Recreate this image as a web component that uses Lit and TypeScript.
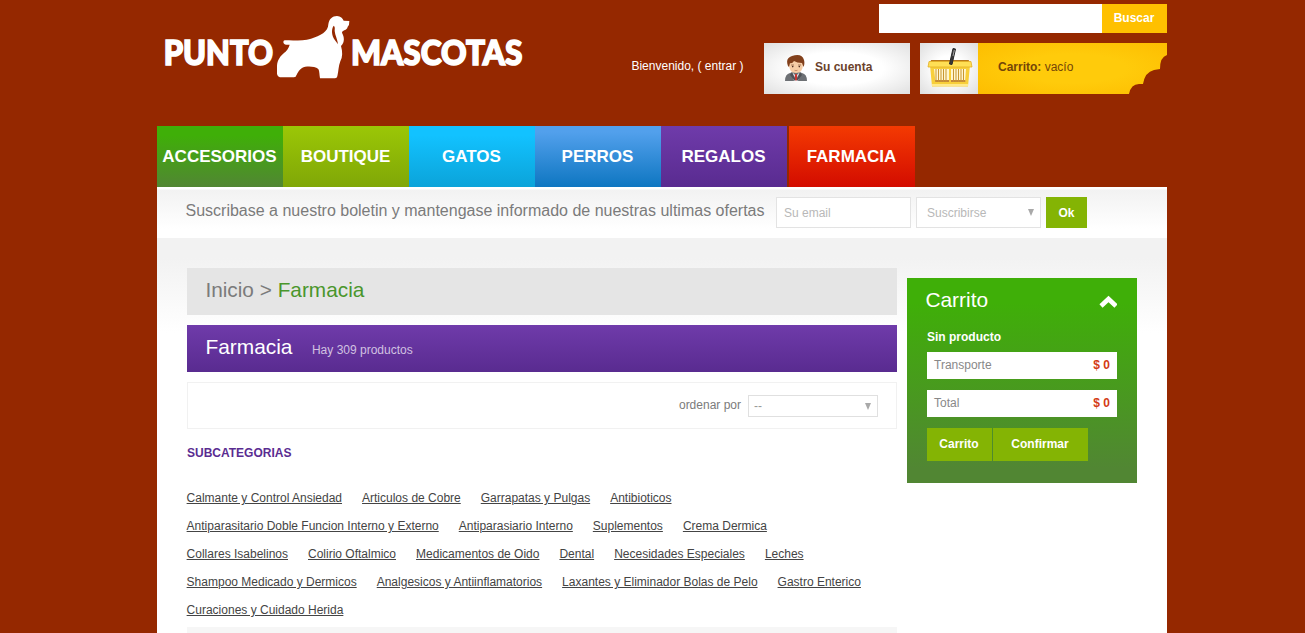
import { LitElement, html, css } from "lit";
import { customElement } from "lit/decorators.js";

const NAV = [
  ["ACCESORIOS", "green"],
  ["BOUTIQUE", "lime"],
  ["GATOS", "cyan"],
  ["PERROS", "blue"],
  ["REGALOS", "purple"],
  ["FARMACIA", "red"],
];

const ROWS = [
  ["Calmante y Control Ansiedad", "Articulos de Cobre", "Garrapatas y Pulgas", "Antibioticos"],
  ["Antiparasitario Doble Funcion Interno y Externo", "Antiparasiario Interno", "Suplementos", "Crema Dermica"],
  ["Collares Isabelinos", "Colirio Oftalmico", "Medicamentos de Oido", "Dental", "Necesidades Especiales", "Leches"],
  ["Shampoo Medicado y Dermicos", "Analgesicos y Antiinflamatorios", "Laxantes y Eliminador Bolas de Pelo", "Gastro Enterico"],
  ["Curaciones y Cuidado Herida"],
];

@customElement("app-root")
export class AppRoot extends LitElement {
  static styles = css`
    :host { display: block; height: 633px; overflow: hidden; background: #952800; font: 12px/16px "Liberation Sans", Arial, sans-serif; color: #7b7b7b; }
    * { box-sizing: border-box; }
    .page { width: 1010px; height: 633px; margin-left: 157px; display: flex; flex-direction: column; }
    .header { height: 126px; display: flex; justify-content: space-between; align-items: flex-start; flex: none; }
    .logo { width: 375px; height: 85px; margin-top: 5px; display: block; overflow: visible; }
    .logo text { font: 900 105px Lato, sans-serif; fill: #fff; stroke: #fff; stroke-width: 5px; }
    .tools { display: flex; flex-direction: column; align-items: flex-end; gap: 10px; padding-top: 4px; }
    .search { display: flex; height: 29px; }
    .field { width: 223px; background: #fff; }
    .searchbtn { width: 65px; background: #ffc000; color: #fff; font-weight: bold; line-height: 28px; text-align: center; padding-right: 1px; }
    .userrow { display: flex; height: 51px; }
    .welcome { color: #fff; line-height: 46px; margin-right: 20.5px; white-space: pre; }
    .account { width: 146px; margin-right: 10px; display: flex; padding-left: 20px; background: radial-gradient(ellipse at center, #fff 45%, #e0e0e0 100%); font-weight: bold; color: #6b422b; line-height: 48px; }
    .account svg { width: 24px; height: 28px; margin: 11px 7px 0 0; }
    .cart { width: 247px; display: flex; }
    .basket { width: 58px; background: radial-gradient(#fff 35%, #dedede 100%); }
    .basket svg { display: block; }
    .status { width: 189px; color: #744508; line-height: 48px; padding-left: 20px; background: radial-gradient(ellipse at center, #ffcb0b 40%, #fdbd00 100%); position: relative; }
    .status svg { position: absolute; right: 0; bottom: 0; }
    .nav { display: flex; height: 61px; flex: none; }
    .tab { width: 126px; color: #fff; font-weight: bold; font-size: 17px; line-height: 61px; text-align: center; padding-right: 1px; }
    .green { background: linear-gradient(#3faf08 15%, #518633); }
    .lime { background: linear-gradient(#9bc706, #80a707); }
    .cyan { background: linear-gradient(#12c2ff 15%, #0ba3d9); }
    .blue { background: linear-gradient(#52a0ec 10%, #0e76c1); }
    .purple { background: linear-gradient(#6f3baa, #592b90); }
    .red { background: linear-gradient(#f43a02, #d30c00); margin-left: 2px; }
    .news { height: 51px; flex: none; display: flex; padding: 10px 0 0 28.5px; background: linear-gradient(#fff 2px, #f2f2f2 3px, #fff 42px); }
    .newstext { width: 590.5px; font-size: 16px; line-height: 27px; white-space: nowrap; }
    .email { width: 135px; height: 31px; background: #fff; border: 1px solid #e3e3e3; padding-left: 7px; line-height: 30px; color: #b8b8b8; margin-right: 5px; }
    .kind { width: 125px; height: 31px; background: #fff; border: 1px solid #e3e3e3; padding: 0 6px 0 10px; line-height: 30px; color: #b8b8b8; margin-right: 5px; display: flex; justify-content: space-between; }
    .arrow { width: 6px; height: 7px; fill: #a9a9a9; margin-top: 10.5px; }
    .ok { width: 41px; height: 31px; background: #84b404; color: #fff; font-weight: bold; line-height: 32px; text-align: center; }
    .body { flex: 1; display: flex; gap: 10px; padding: 30px 30px 0; background: linear-gradient(#f2f2f2 20px, #fff 95px); }
    .main { width: 710px; }
    .crumb { height: 47px; background: #e5e5e5; padding-left: 18.4px; font-size: 20.8px; line-height: 44px; margin-bottom: 10px; }
    .here { color: #4a962c; }
    .title { height: 47px; padding-left: 18.4px; display: flex; color: #fff; font-size: 20.9px; line-height: 44px; margin-bottom: 10px; }
    .count { font-size: 12px; line-height: 50px; margin-left: 19.5px; color: #d1c1e1; }
    .sort { height: 47px; border: 1px solid #f1f1f1; background: #fff; display: flex; justify-content: flex-end; padding: 12px 18px 0 0; line-height: 20px; }
    .order { width: 130px; height: 22px; border: 1px solid #e0e0e0; margin-left: 7px; padding: 0 6px 0 5px; display: flex; justify-content: space-between; color: #999; line-height: 21px; }
    .order .arrow { margin-top: 6.5px; }
    .heading { font-weight: bold; color: #5a2c91; margin: 16px 0 29px; }
    .cats { display: flex; flex-direction: column; gap: 12px; height: 137px; margin-left: -0.4px; }
    .catrow { display: flex; gap: 20px; height: 16px; line-height: 16px; white-space: nowrap; }
    .cat { color: #444; text-decoration: underline; }
    .foot { height: 6px; background: #f6f6f6; }
    .side { width: 230px; height: 205px; margin-top: 10px; padding: 0 20px; background: linear-gradient(#3faf08 12%, #518633 93%); color: #fff; }
    .sidehead { display: flex; justify-content: space-between; font-size: 20.9px; line-height: 44px; height: 51px; margin-left: -1.6px; }
    .empty { font-weight: bold; height: 23px; }
    .line { height: 27px; background: #fff; display: flex; justify-content: space-between; padding: 0 7px; line-height: 26px; color: #888; margin-bottom: 11px; }
    .price { font-weight: bold; color: #d33b15; }
    .actions { display: flex; gap: 1px; }
    .action { background: #84b404; height: 33px; width: 65px; line-height: 32px; font-weight: bold; text-align: center; padding-right: 1px; }
    .wide { width: 95px; }
  `;

  arrow() {
    return html`<svg class="arrow" viewBox="0 0 6 7"><path d="M0 0h6L3 7z" /></svg>`;
  }

  render() {
    return html`
      <div class="page">
        <div class="header">
          <svg class="logo" viewBox="0 0 1125 255">
            <text x="20" y="181" textLength="328" lengthAdjust="spacingAndGlyphs">PUNTO</text>
            <text x="582" y="181" textLength="514" lengthAdjust="spacingAndGlyphs">MASCOTAS</text>
            <path fill="#fff" d="M384 106C412 107 440 107 462 101C490 93 514 80 514 58C516 42 526 33 540 33C551 34 557 40 560 47L577 48L576 59C575 63 571 64 571 69C567 77 556 75 555 83C562 96 564 111 552 123C557 141 557 156 550 169C544 184 545 199 541 214Q540 220 534 220H489C487 210 488 200 484 192C471 183 447 183 435 189C424 196 421 207 416 215L411 217H375Q361 217 360 206V183C361 165 370 153 381 144C389 138 395 130 398 119H388Q379 118 379 110Q380 106 384 106Z" />
            <path fill="#952800" d="M530 62C522 74 524 92 534 106L543 118C542 104 534 91 533 78C533 71 535 66 530 62Z" />
          </svg>
          <div class="tools">
            <div class="search"><div class="field"></div><div class="searchbtn">Buscar</div></div>
            <div class="userrow">
              <div class="welcome">Bienvenido, ( entrar )</div>
              <div class="account">
                <svg viewBox="0 0 24 28">
                  <path d="M1 27Q1 20 6 19L12 17L18 19Q23 20 23 27Z" fill="#6d7074" />
                  <path d="M8 18L12 22L16 18L14 27H10Z" fill="#e4e7ec" />
                  <path d="M11.2 20h1.6l.8 5-1.6 2-1.6-2z" fill="#c73633" />
                  <path d="M8 18L6 21L11 27L11 24ZM16 18L18 21L13 27V24Z" fill="#4f5257" />
                  <path d="M5 10Q4 4 12 4T19 10Q19 19 12 19T5 10Z" fill="#f6cda6" />
                  <path d="M4 12Q1 4 8 2Q18-1 20 6Q21 10 19.5 13L18 9Q13 9 10 7Q8 10 6 9L5 13Z" fill="#82401c" />
                  <path d="M7 11h3M14 11h3" stroke="#8a5a3b" stroke-width=".7" />
                  <circle cx="8.7" cy="12.6" r=".8" fill="#4b2c20" /><circle cx="15.3" cy="12.6" r=".8" fill="#4b2c20" />
                  <path d="M10.5 16.3q1.5.6 3 0" stroke="#c58460" stroke-width=".8" fill="none" />
                </svg>
                <span>Su cuenta</span>
              </div>
              <div class="cart">
                <div class="basket">
                  <svg width="58" height="51" viewBox="0 0 58 51">
                    <path d="M11 17H49L48 21H10Z" fill="#b9791c" />
                    <path d="M10 22H50L48 43.5H12Z" fill="#f8cf3a" />
                    <path d="M14 26H29V39H15.5ZM31 26H46L45 39H31Z" fill="#fff6cf" />
                    <path d="M15 37H29V39H15.3ZM31 37H45.3V39H31Z" fill="#c4883a" />
                    <path d="M16 26V39M18.5 26V39M21 26V39M23.5 26V39M26 26V39M33.5 26V39M36 26V39M38.5 26V39M41 26V39M43.5 26V39" stroke="#c9962f" stroke-width="1" />
                    <path d="M9 18.5L8 24H52L51 18.5Z" fill="#ffdf55" stroke="#e3ae25" stroke-width=".8" />
                    <path d="M12 42H48" stroke="#ffe98a" stroke-width="2" />
                    <path d="M33 5.5L35.5 6L32 21.5L29.5 21Z" fill="#38383a" stroke="#2a2a2a" />
                    <path d="M34.3 7L33 13" stroke="#a5a5a5" />
                  </svg>
                </div>
                <div class="status"><b>Carrito:</b> vacío
                  <svg width="40" height="40" viewBox="0 0 40 40"><path fill="#952800" d="M2 40Q4 30 12 30L16 30Q18 18 27 16L33 15Q33 3 40 1V40Z" /></svg>
                </div>
              </div>
            </div>
          </div>
        </div>
        <div class="nav">${NAV.map(([t, c]) => html`<div class="tab ${c}">${t}</div>`)}</div>
        <div class="news">
          <div class="newstext">Suscribase a nuestro boletin y mantengase informado de nuestras ultimas ofertas</div>
          <div class="email">Su email</div>
          <div class="kind"><span>Suscribirse</span>${this.arrow()}</div>
          <div class="ok">Ok</div>
        </div>
        <div class="body">
          <div class="main">
            <div class="crumb">Inicio &gt; <span class="here">Farmacia</span></div>
            <div class="title purple">Farmacia<span class="count">Hay 309 productos</span></div>
            <div class="sort">ordenar por<div class="order"><span>--</span>${this.arrow()}</div></div>
            <div class="heading">SUBCATEGORIAS</div>
            <div class="cats">${ROWS.map((r) => html`<div class="catrow">${r.map((t) => html`<span class="cat">${t}</span>`)}</div>`)}</div>
            <div class="foot"></div>
          </div>
          <div class="side">
            <div class="sidehead">Carrito
              <svg width="18" height="44" viewBox="0 0 18 44"><path d="M2 28L9.5 21L17 28" fill="none" stroke="#fff" stroke-width="4.6" /></svg>
            </div>
            <div class="empty">Sin producto</div>
            <div class="line">Transporte<span class="price">$ 0</span></div>
            <div class="line">Total<span class="price">$ 0</span></div>
            <div class="actions"><div class="action">Carrito</div><div class="action wide">Confirmar</div></div>
          </div>
        </div>
      </div>
    `;
  }
}
